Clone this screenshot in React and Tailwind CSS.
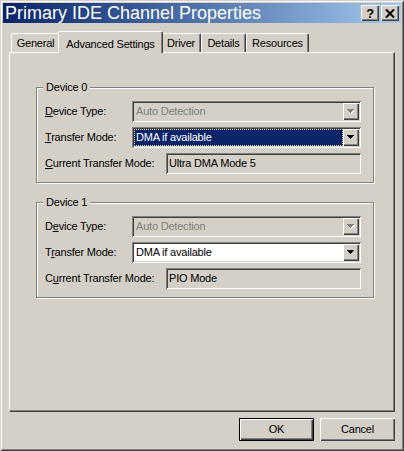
import React from "react";

const raised =
  "shadow-[inset_1px_1px_0_#fff,inset_-1px_-1px_0_#404040,inset_-2px_-2px_0_#808080]";
const sunken =
  "shadow-[inset_1px_1px_0_#808080,inset_-1px_-1px_0_#fff,inset_2px_2px_0_#404040,inset_-2px_-2px_0_#d4d0c8]";

function Arrow({ disabled }) {
  const tri = (dx, fill) => (
    <g fill={fill}>
      <rect x={0 + dx} y={0 + dx} width="7" height="1" />
      <rect x={1 + dx} y={1 + dx} width="5" height="1" />
      <rect x={2 + dx} y={2 + dx} width="3" height="1" />
      <rect x={3 + dx} y={3 + dx} width="1" height="1" />
    </g>
  );
  return (
    <svg width="8" height="5" viewBox="0 0 8 5" shapeRendering="crispEdges">
      {disabled && tri(1, "#fff")}
      {tri(0, disabled ? "#808080" : "#000")}
    </svg>
  );
}

function Combo({ value, disabled, selected }) {
  return (
    <div className={`flex h-[21px] w-[229px] p-[2px] ${sunken} ${disabled ? "bg-[#d4d0c8]" : "bg-white"}`}>
      <div className="flex flex-1 items-center">
        {selected ? (
          <div className="flex h-full w-full items-center border border-dotted border-[#e8d890] bg-[#0a246a] pl-[1px] text-white">
            {value}
          </div>
        ) : (
          <span className={`pl-[2px] ${disabled ? "text-[#808080]" : "text-black"}`}>{value}</span>
        )}
      </div>
      <div className={`flex h-full w-[16px] items-center justify-center bg-[#d4d0c8] ${raised}`}>
        <Arrow disabled={disabled} />
      </div>
    </div>
  );
}

function Row({ label, labelW, children }) {
  return (
    <div className="flex h-[21px] items-center">
      <span className={labelW}>{label}</span>
      {children}
    </div>
  );
}

function Device({ n, labels, current, selected, className }) {
  return (
    <div className={`relative w-[338px] border border-[#808080] pb-[8px] pl-[8px] pt-[13px] shadow-[inset_1px_1px_0_#fff,1px_1px_0_#fff] ${className}`}>
      <span className="absolute left-[6px] top-[-7px] bg-[#d4d0c8] px-[3px] leading-[13px]">Device {n}</span>
      <div className="flex flex-col gap-[5px]">
        <Row label={labels[0]} labelW="w-[87px]">
          <Combo value="Auto Detection" disabled />
        </Row>
        <Row label={labels[1]} labelW="w-[87px]">
          <Combo value="DMA if available" selected={selected} />
        </Row>
        <Row label={labels[2]} labelW="w-[121px]">
          <div className={`flex h-[21px] w-[195px] items-center bg-[#d4d0c8] pl-[3px] ${sunken}`}>{current}</div>
        </Row>
      </div>
    </div>
  );
}

const tabs = [
  { name: "General", w: "w-[49px]" },
  { name: "Advanced Settings", w: "w-[105px]", active: true },
  { name: "Driver", w: "w-[40px]" },
  { name: "Details", w: "w-[45px]" },
  { name: "Resources", w: "w-[63px]" },
];

export default function App() {
  return (
    <div className={`flex h-[451px] w-[404px] flex-col bg-[#d4d0c8] p-[3px] font-['Liberation_Sans',Arial,sans-serif] text-[11px] tracking-[-0.2px] text-black shadow-[inset_1px_1px_0_#d4d0c8,inset_-1px_-1px_0_#404040,inset_2px_2px_0_#fff,inset_-2px_-2px_0_#808080]`}>
      {/* title bar */}
      <div className="flex h-[20px] items-center justify-between bg-linear-to-r from-[#0a246a] to-[#a6caf0] pl-[2px] pr-[2px]">
        <span className="text-[18px] leading-[20px] tracking-normal text-white">Primary IDE Channel Properties</span>
        <div className="flex gap-[2px]">
          <div className={`flex h-[16px] w-[18px] items-center justify-center bg-[#d4d0c8] text-[13px] font-bold leading-none ${raised}`}>?</div>
          <div className={`flex h-[16px] w-[18px] items-center justify-center bg-[#d4d0c8] ${raised}`}>
            <svg width="10" height="9" viewBox="0 0 10 9">
              <path d="M1 0.5L9 8.5M9 0.5L1 8.5" stroke="#000" strokeWidth="2" />
            </svg>
          </div>
        </div>
      </div>

      <div className="px-[6px]">
        {/* tabs */}
        <div className="mt-[8px] flex h-[21px] items-end pl-[2px]">
          {tabs.map((t) =>
            t.active ? (
              <div key={t.name} className={`relative z-10 -mx-[2px] mb-[-1px] flex h-[22px] ${t.w} items-start justify-center rounded-t-[2px] border-l border-t border-r border-l-white border-t-white border-r-[#404040] bg-[#d4d0c8] pt-[4px] shadow-[inset_-1px_0_0_#808080]`}>
                {t.name}
              </div>
            ) : (
              <div key={t.name} className={`flex h-[19px] ${t.w} items-center justify-center rounded-t-[2px] border-l border-t border-r border-l-white border-t-white border-r-[#404040] shadow-[inset_-1px_0_0_#808080]`}>
                {t.name}
              </div>
            )
          )}
        </div>

        {/* panel */}
        <div className="h-[360px] border-b border-l border-r border-t border-b-[#404040] border-l-white border-r-[#404040] border-t-white pl-[26px] pt-[34px] shadow-[inset_-1px_-1px_0_#808080]">
          <Device
            n="0"
            selected
            current="Ultra DMA Mode 5"
            labels={[
              <><u>D</u>evice Type:</>,
              <><u>T</u>ransfer Mode:</>,
              <><u>C</u>urrent Transfer Mode:</>,
            ]}
          />
          <Device
            n="1"
            className="mt-[19px]"
            current="PIO Mode"
            labels={[
              <>D<u>e</u>vice Type:</>,
              <>T<u>r</u>ansfer Mode:</>,
              <>C<u>u</u>rrent Transfer Mode:</>,
            ]}
          />
        </div>

        {/* buttons */}
        <div className="mt-[6px] flex justify-end gap-[6px]">
          <div className="h-[23px] w-[75px] border border-black">
            <div className={`flex h-full w-full items-center justify-center ${raised}`}>OK</div>
          </div>
          <div className={`flex h-[23px] w-[75px] items-center justify-center ${raised}`}>Cancel</div>
        </div>
      </div>
    </div>
  );
}
